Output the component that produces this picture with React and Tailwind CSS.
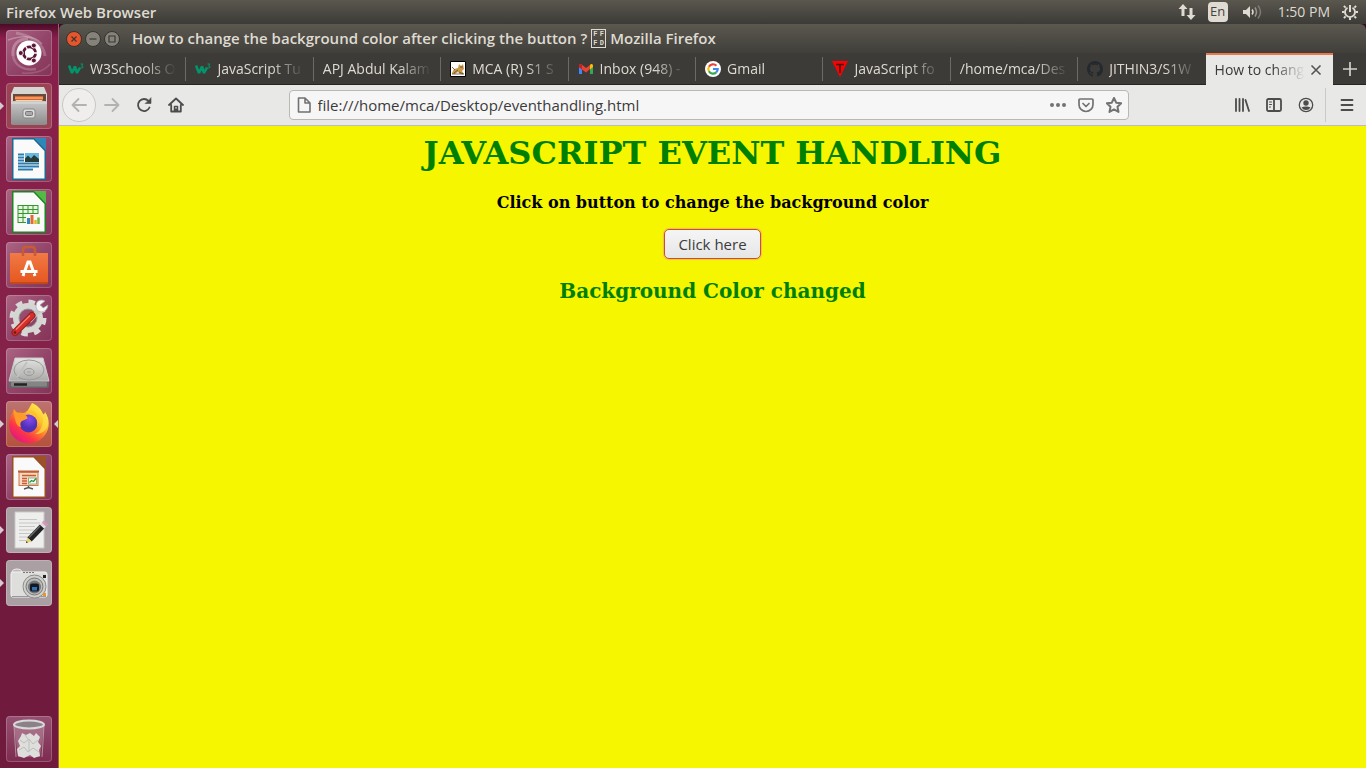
import React from "react";

function Ubuntu() {
  return (
    <svg viewBox="0 0 46 46" className="size-full" aria-hidden="true">
      <g fill="none" stroke="#fff" strokeOpacity=".28" strokeWidth="1.6">
        <path d="M2 10C14 6 28 4 36 14" />
        <path d="M10 3C26 6 38 14 39 26" strokeWidth="3" strokeOpacity=".22" />
        <path d="M7 26C6 14 12 9 22 9" strokeWidth="3" />
        <path d="M7 26C9 36 18 41 30 39" strokeWidth="2.5" strokeOpacity=".2" />
        <path d="M44 34C38 42 26 44 16 43" strokeOpacity=".15" />
      </g>
      <circle cx="23" cy="23" r="12.5" fill="#fff" />
      <circle cx="23.5" cy="23" r="6" fill="none" stroke="#5e1638" strokeWidth="3" />
      <g stroke="#fff" strokeWidth="1.3">
        <path d="M23.5 23L31.5 23M23.5 23L19.5 16M23.5 23L19.5 30" />
      </g>
      <circle cx="23.5" cy="23" r="4.5" fill="#fff" />
      <g fill="#5e1638" stroke="#fff" strokeWidth=".9">
        <circle cx="14.8" cy="23" r="2.5" />
        <circle cx="27.8" cy="15.5" r="2.5" />
        <circle cx="27.8" cy="30.5" r="2.5" />
      </g>
    </svg>
  );
}

function Files() {
  return (
    <svg viewBox="0 0 46 46" className="size-full" aria-hidden="true">
      <defs>
        <linearGradient id="fi" x2="0" y2="1">
          <stop stopColor="#c9c9c9" /><stop offset="1" stopColor="#8b8b8b" />
        </linearGradient>
      </defs>
      <path d="M8 4H38L41 11V41H5V11Z" fill="#d6d6d3" />
      <path d="M7 11H40V19H7Z" fill="#6a4b3a" />
      <path d="M9 13H37V19H9Z" fill="#d9652a" />
      <path d="M9 15H37M10 17.500H36" stroke="#f7d3a8" strokeWidth="1" />
      <path d="M5 20Q5 18 7 18H39Q41 18 41 20V40Q41 42 39 42H7Q5 42 5 40Z" fill="url(#fi)" />
      <path d="M5 20H41" stroke="#e0e0e0" />
      <rect x="17" y="26" width="12" height="9" rx="2" fill="#ddd" stroke="#888" />
      <rect x="19.5" y="28.500" width="7" height="4" rx="1" fill="#aaa" stroke="#777" />
    </svg>
  );
}

function Sheet({ color, fold, children }) {
  return (
    <svg viewBox="0 0 46 46" className="size-full" aria-hidden="true">
      <path d="M6 2H29L40 14V44H6Z" fill={color} />
      <path d="M7.500 3.500H27.500L38.500 15V42.500H7.500Z" fill="#fafafa" />
      <path d="M28 2H40V14.500Z" fill={fold} />
      {children}
    </svg>
  );
}

const Writer = () => (
  <Sheet color="#1d6793" fold="#2f86b8">
    <path d="M12 18.500H18M12 21.500H18M12 24.500H18M12 27.500H33M12 30.500H33M12 33.500H27" stroke="#2b7db0" strokeWidth="2" />
    <rect x="19" y="17" width="14" height="9" fill="#68b7e2" />
    <path d="M19 26V22.500L22 19.500L25 22.500L28 19L33 23V26Z" fill="#263c36" />
  </Sheet>
);

const Calc = () => (
  <Sheet color="#18851d" fold="#55b948">
    <rect x="12" y="16.500" width="20" height="17" fill="#e6f5df" stroke="#35952f" />
    <path d="M12 20.500H32M12 24.500H32M12 28.500H32M17 16V34M22 16V34M27 16V34" stroke="#35952f" />
    <rect x="20" y="25" width="14" height="10" fill="#f6f6f6" />
    <path d="M22.500 35V29" stroke="#3387bb" strokeWidth="3" />
    <path d="M26 35V26" stroke="#e06c30" strokeWidth="3" />
    <path d="M29.500 35V31" stroke="#e4b528" strokeWidth="2.500" />
    <path d="M32.500 35V28.500" stroke="#6db43f" strokeWidth="2.500" />
  </Sheet>
);

const Impress = () => (
  <Sheet color="#9a4d20" fold="#9b5228">
    <path d="M12 17.500H33" stroke="#bd6134" strokeWidth="2" />
    <rect x="13" y="18.500" width="19" height="13" fill="#f7d9c5" stroke="#cf7549" />
    <path d="M16 21.500H30M16 24.500H21M16 27H21M16 29.500H21" stroke="#c65c30" strokeWidth="1.300" />
    <rect x="22.500" y="24" width="8" height="6" fill="#fff" stroke="#8bb07c" />
    <path d="M23.500 28.500L25.500 26.500L27.500 27.500L30 24.500" fill="none" stroke="#29933a" strokeWidth="1.300" />
    <path d="M22.500 32V34M18 35L22.500 33.500L27 35" fill="none" stroke="#555" strokeWidth="1.500" />
  </Sheet>
);

function Software() {
  return (
    <svg viewBox="0 0 46 46" className="size-full" aria-hidden="true">
      <defs>
        <linearGradient id="so" x2="0" y2="1">
          <stop stopColor="#f07a45" /><stop offset="1" stopColor="#e5561e" />
        </linearGradient>
      </defs>
      <path d="M4 11H42V40Q42 42 40 42H6Q4 42 4 40Z" fill="url(#so)" />
      <path d="M17 14V8Q17 5 20 5H26Q29 5 29 8V14" fill="none" stroke="#c95a33" strokeWidth="2.500" />
      <path d="M4 41H42" stroke="#b9431a" strokeWidth="1.500" />
      <path d="M17 34L22 20H24L29 34M14.500 29.500H31.500" fill="none" stroke="#fff" strokeWidth="3" />
      <path d="M19 31.500H28" stroke="#e5602a" />
    </svg>
  );
}

function Settings() {
  return (
    <svg viewBox="0 0 46 46" className="size-full" aria-hidden="true">
      <circle cx="22" cy="23" r="15.500" fill="none" stroke="#d8d8d6" strokeWidth="6" strokeDasharray="6.200 5.970" />
      <circle cx="22" cy="23" r="12" fill="none" stroke="#d5d5d3" strokeWidth="6" />
      <circle cx="22" cy="23" r="9" fill="none" stroke="#929292" />
      <path d="M23 26L34 14" stroke="#c8c8c8" strokeWidth="5" />
      <path d="M36 5Q30 5 30 11Q30 16 35 17Q41 17 42 10L37 13L34 10L39 6Z" fill="#f3f3f3" stroke="#aaa" strokeWidth=".7" />
      <path d="M9 37.500L26 20.500" stroke="#951f1e" strokeWidth="7" strokeLinecap="round" />
      <path d="M9 37.500L26 20.500" stroke="#d62e29" strokeWidth="5" strokeLinecap="round" />
      <path d="M10 34.500L24 20.500" stroke="#f48179" strokeWidth="1.200" />
      <circle cx="9" cy="37.500" r="1.300" fill="#691616" />
    </svg>
  );
}

function Disk() {
  return (
    <svg viewBox="0 0 46 46" className="size-full" aria-hidden="true">
      <defs>
        <linearGradient id="di" x2="0" y2="1">
          <stop stopColor="#e3e3e1" /><stop offset="1" stopColor="#a9a9a7" />
        </linearGradient>
      </defs>
      <path d="M9 10H37L43 33V38Q43 40 41 40H5Q3 40 3 38V33Z" fill="#666" />
      <path d="M9 10H37L43 33H3Z" fill="url(#di)" stroke="#c9c9c9" />
      <ellipse cx="23" cy="22" rx="15" ry="10" fill="none" stroke="#999" />
      <ellipse cx="23" cy="24" rx="5" ry="3.500" fill="none" stroke="#999" />
      <ellipse cx="23" cy="24" rx="2" ry="1.200" fill="#b0b0b0" />
      <path d="M21 14L11 29" stroke="#c0c0c0" strokeWidth="2" />
      <rect x="5" y="34" width="36" height="4.500" rx="1" fill="#858585" />
      <path d="M8 36.500H21" stroke="#222" strokeWidth="2.500" />
    </svg>
  );
}

function Firefox() {
  return (
    <svg viewBox="0 0 46 46" className="size-full" aria-hidden="true">
      <defs>
        <linearGradient id="ff" x1=".85" y1=".1" x2=".2" y2=".95">
          <stop stopColor="#fff04f" /><stop offset=".3" stopColor="#ffc02e" />
          <stop offset=".52" stopColor="#ff7a2b" /><stop offset=".75" stopColor="#fb3547" />
          <stop offset="1" stopColor="#e31587" />
        </linearGradient>
        <radialGradient id="fg" cx=".55" cy=".25">
          <stop stopColor="#8a4bf0" /><stop offset="1" stopColor="#5030b8" />
        </radialGradient>
      </defs>
      <path d="M26 2C33 5 36 10 37 13C39 14 39 12 39 11C44 18 44 27 39 34C34 41 26 43 20 42C10 41 3 33 3 24C3 18 5 14 7 11L8 8L11 12Q14 11 17 12C21 12 22 9 26 2Z" fill="url(#ff)" />
      <path d="M26 2C33 5 38 13 37 21C36 27 33 31 29 33C36 34 43 28 42 19C41 15 40 13 39 11Q38 14 37 14Q34 6 26 2Z" fill="#ffe14a" fillOpacity=".7" />
      <circle cx="22.500" cy="22.500" r="9" fill="url(#fg)" />
      <path d="M8 8C9 12 13 12 17 12.500C20 14 22 16 21.500 17.500L16 20C14 21 14 24 15 26C12 26 10 23 9 18C8 14 7 11 8 8Z" fill="#ff9b29" />
      <path d="M17 13C21 9 26 12 28 15C32 17 32 22 30.500 26C35 19 32 12 26 10C23 9 20 10 17 13Z" fill="#ffc02d" />
    </svg>
  );
}

function TextEditor() {
  return (
    <svg viewBox="0 0 46 46" className="size-full" aria-hidden="true">
      <path d="M9 5H38V41H9Z" fill="#eeeeec" stroke="#c9c9c7" />
      <path d="M13 12.500H31M13 16H34M13 19.500H29M13 23H28M13 26.500H25M13 30H22M13 33.500H21" stroke="#c6c6c4" strokeWidth="1" />
      <path d="M23.500 32.500L36 19.500" stroke="#222" strokeWidth="6" />
      <path d="M23 30.500L34 19" stroke="#666" strokeWidth="1.500" />
      <path d="M36 19.500L38 17.500" stroke="#ddd" strokeWidth="6" />
      <path d="M38 17.500L40 15.500" stroke="#d995bd" strokeWidth="6" />
      <path d="M20 36L21.400 30.400L25.700 34.600Z" fill="#ecd26a" />
      <path d="M20 36L20.500 34L21.900 35.500Z" fill="#222" />
    </svg>
  );
}

function Camera() {
  return (
    <svg viewBox="0 0 46 46" className="size-full" aria-hidden="true">
      <ellipse cx="11" cy="12" rx="5" ry="3" fill="#bbb" stroke="#f0f0f0" />
      <rect x="5" y="12" width="36" height="25" rx="2" fill="#dededc" stroke="#f2f2f0" />
      <path d="M6 36.500H40" stroke="#999" />
      <path d="M17 12.500H29" stroke="#777" strokeDasharray="2 1" />
      <circle cx="28.500" cy="26.500" r="11.500" fill="#cfcfcd" stroke="#8b8b89" />
      <circle cx="28.500" cy="26.500" r="8.500" fill="#bcbcba" stroke="#777" />
      <circle cx="28.500" cy="27" r="6.500" fill="#777" />
      <rect x="24" y="23.500" width="9" height="8" rx="2" fill="#10182a" />
      <rect x="26" y="27" width="5" height="3.500" fill="#3670a8" />
      <rect x="37" y="15" width="3" height="3" fill="#222" />
      <rect x="37" y="33" width="3" height="3" fill="#f09422" />
    </svg>
  );
}

function Trash() {
  return (
    <svg viewBox="0 0 46 46" className="size-full" aria-hidden="true">
      <path d="M8 9H38L34 41H12Z" fill="#fff" fillOpacity=".22" />
      <path d="M10 41L8 10M36 41L38 10" stroke="#ccc" strokeOpacity=".6" />
      <path d="M12 40L11 33L14 30L12 25L15 20L16 17L20 19L24 17L28 20L30 17L34 21L32 26L35 30L33 34L34 40L28 42L24 39L18 42Z" fill="#dededc" />
      <path d="M14 24L18 27L23 23L27 28L32 24M13 34L18 31L22 36L27 32L33 36M19 19L22 23M23 24V35" fill="none" stroke="#bdbdbb" strokeWidth="1" />
      <ellipse cx="23" cy="8.500" rx="15" ry="4" fill="#8b8189" stroke="#d9d9d7" strokeWidth="2" />
    </svg>
  );
}

const glass = "bg-gradient-to-br from-[#ab6583] via-[#93466a] to-[#853457]";
const APPS = [
  { name: "Search your computer", Icon: Ubuntu, tile: glass },
  { name: "Files", Icon: Files, tile: "bg-[#9a4355]", running: true },
  { name: "LibreOffice Writer", Icon: Writer, tile: glass },
  { name: "LibreOffice Calc", Icon: Calc, tile: glass },
  { name: "Ubuntu Software", Icon: Software, tile: glass },
  { name: "System Settings", Icon: Settings, tile: glass },
  { name: "Disks", Icon: Disk, tile: glass },
  { name: "Firefox Web Browser", Icon: Firefox, tile: "bg-gradient-to-b from-[#bd7371] to-[#b4523b]", running: true, focused: true },
  { name: "LibreOffice Impress", Icon: Impress, tile: glass },
  { name: "Text Editor", Icon: TextEditor, tile: "bg-[#aaa0a4]", running: true },
  { name: "Screenshot", Icon: Camera, tile: "bg-[#aaa0a4]", running: true },
];

function LauncherButton({ app }) {
  const { Icon, name, tile, running, focused } = app;
  return (
    <div className="relative flex w-full justify-center">
      {running && <span className="absolute top-1/2 left-0 -mt-1 border-y-4 border-l-4 border-y-transparent border-l-[#d5ccd0]" />}
      <button type="button" aria-label={name} className={`size-[46px] rounded inset-ring inset-ring-white/20 ${tile}`}>
        <Icon />
      </button>
      {focused && <span className="absolute top-1/2 right-0 -mt-1 border-y-4 border-r-4 border-y-transparent border-r-[#d5ccd0]" />}
    </div>
  );
}

function Launcher() {
  return (
    <nav aria-label="Launcher" className="flex w-[59px] shrink-0 flex-col justify-between border-r border-[#a75878] bg-[linear-gradient(#4c0b28_0px,#87204a_14px,#852249_45%,#701b3d_75%,#701b3d)] pt-[6px] pb-[6px]">
      <div className="flex flex-col gap-[7px]">
        {APPS.map((a) => <LauncherButton key={a.name} app={a} />)}
      </div>
      <LauncherButton app={{ name: "Trash", Icon: Trash, tile: "bg-gradient-to-b from-[#965071] to-[#7e2b50]" }} />
    </nav>
  );
}

function PowerIcon() {
  return (
    <svg viewBox="0 0 16 16" className="size-4" fill="none" stroke="#dfdbd2" aria-hidden="true">
      <path d="M5.500 3.700A5 5 0 1 0 10.500 3.700" strokeWidth="1.800" />
      <path d="M8 1V8" strokeWidth="2" />
      <path d="M3.600 3.600L1.900 1.900M12.400 3.600L14.100 1.900M2.500 8H0M13.500 8H16M3.600 12.400L1.900 14.100M12.400 12.400L14.100 14.100M8 13.500V16" strokeWidth="2" />
    </svg>
  );
}

function TopPanel() {
  return (
    <header className="flex h-6 shrink-0 items-center justify-between bg-gradient-to-b from-[#5a574e] to-[#3c3b37] pr-2 pl-[6px] text-[#dfdbd2]">
      <span className="text-[15px] font-semibold">Firefox Web Browser</span>
      <div className="flex items-center">
        <svg viewBox="0 0 18 18" className="mr-3 size-[18px]" fill="#dfdbd2" aria-hidden="true">
          <path d="M5 1L9.500 6H6.500V13H3.500V6H.5Z" /><path d="M13 17L8.500 12H11.500V5H14.500V12H17.500Z" />
        </svg>
        <span className="mr-[14px] flex h-5 w-5 items-center justify-center rounded-sm bg-[#dfdbd2] text-[13px] text-[#45433e]">En</span>
        <svg viewBox="0 0 20 16" className="mr-4 h-4 w-5" fill="none" aria-hidden="true">
          <path d="M1 6H4L8 2V14L4 10H1Z" fill="#dfdbd2" />
          <path d="M10 5.500Q12 8 10 10.500" stroke="#dfdbd2" strokeWidth="1.500" />
          <path d="M13 3.500Q16 8 13 12.500" stroke="#9a978f" strokeWidth="1.500" />
          <path d="M16 1.500Q21 8 16 14.500" stroke="#7d7a73" strokeWidth="1.500" />
        </svg>
        <span className="mr-3 text-sm">1:50 PM</span>
        <PowerIcon />
      </div>
    </header>
  );
}

function WindowButton({ label, tone, children }) {
  return (
    <button type="button" aria-label={label} className={`size-4 rounded-full border border-[#35342f] ${tone}`}>
      <svg viewBox="0 0 14 14" className="size-full" fill="none" stroke="#3a3935" strokeWidth="1.200" aria-hidden="true">{children}</svg>
    </button>
  );
}

function TitleBar() {
  return (
    <div className="flex h-[29px] shrink-0 items-center rounded-t-md bg-gradient-to-b from-[#5b584f] to-[#403f3a] pl-[7px] text-[#dfdbd2]">
      <div className="flex gap-[3px]">
        <WindowButton label="Close" tone="bg-[#e9552b]"><path d="M4.500 4.500L9.500 9.500M9.500 4.500L4.500 9.500" /></WindowButton>
        <WindowButton label="Minimize" tone="bg-[#85827a]"><path d="M3.500 7H10.500" /></WindowButton>
        <WindowButton label="Maximize" tone="bg-[#85827a]"><path d="M4 4H10V10H4Z" /></WindowButton>
      </div>
      <h1 className="ml-3 flex items-center gap-1 text-[15px] font-semibold whitespace-nowrap">
        <span>How to change the background color after clicking the button ?</span>
        <span className="grid h-[19px] w-[15px] grid-cols-2 place-items-center border border-[#dfdbd2] font-mono text-[7px] leading-[8px] font-bold">
          <span>F</span><span>F</span><span>F</span><span>D</span>
        </span>
        <span>Mozilla Firefox</span>
      </h1>
    </div>
  );
}

const W3 = () => (
  <svg viewBox="0 0 16 16" className="size-4 shrink-0" fill="none" stroke="#04946a" aria-hidden="true">
    <path d="M1 4.500L4 12L7 5.500L9 12L12 6.500" strokeWidth="2.600" strokeLinejoin="bevel" />
    <path d="M12.500 3H15L13.500 5Q15.500 5 15 6.500Q14 7.500 12.500 6.700" strokeWidth="1" />
  </svg>
);
const Tomcat = () => (
  <svg viewBox="0 0 16 16" className="size-4 shrink-0" aria-hidden="true">
    <path d="M.5.500H15.500V15.500H.5Z" fill="#fff" stroke="#000" />
    <path d="M2 12L4 8L8 7L9 3L11 5L13 3L14 8L12 10L14 13H10L8 11L5 13H2Z" fill="#c99a4b" />
    <path d="M2 6L5 9M4 12L8 9M10 6H13M9 11L13 13M2 13H14" stroke="#604a2a" strokeWidth=".8" />
  </svg>
);
const GmailM = () => (
  <svg viewBox="0 0 16 16" className="size-4 shrink-0" aria-hidden="true">
    <path d="M1 4V13H4V6Z" fill="#4285f4" /><path d="M15 4V13H12V6Z" fill="#34a853" />
    <path d="M12 4L13 3Q15 2.500 15 4.500V6L12 8.500Z" fill="#fbbc04" />
    <path d="M1 6V4.500Q1 2.500 3 3L8 7L12 4V8L8 11.500L4 8.500Z" fill="#ea4335" />
    <path d="M1 4.500Q1 2.500 3 3L4 4V8.500L1 6Z" fill="#c5221f" />
  </svg>
);
const GoogleG = () => (
  <svg viewBox="0 0 16 16" className="size-4 shrink-0" fill="none" strokeWidth="2.200" aria-hidden="true">
    <circle cx="8" cy="8" r="8" fill="#fff" />
    <path d="M11.400 4.700A4.700 4.700 0 0 0 3.900 5.700" stroke="#ea4335" />
    <path d="M3.900 5.700A4.700 4.700 0 0 0 3.900 10.300" stroke="#fbbc05" />
    <path d="M3.900 10.300A4.700 4.700 0 0 0 11.200 11.400" stroke="#34a853" />
    <path d="M11.200 11.400A4.700 4.700 0 0 0 12.700 8H8" stroke="#4285f4" />
  </svg>
);
const Triangle = () => (
  <svg viewBox="0 0 16 16" className="size-4 shrink-0" aria-hidden="true">
    <path d="M0 0H16L8 16Z" fill="#f00" />
    <path d="M4 3.500H12M8 3.500V12" stroke="#3c1512" strokeWidth="1.600" />
  </svg>
);
const Octocat = () => (
  <svg viewBox="0 0 16 16" className="size-4 shrink-0" fill="#24292e" aria-hidden="true">
    <path d="M8 0C3.580 0 0 3.580 0 8c0 3.540 2.290 6.530 5.470 7.590.4.070.55-.17.55-.38 0-.19-.01-.82-.01-1.490-2.010.37-2.530-.49-2.690-.94-.09-.23-.48-.94-.82-1.130-.28-.15-.68-.52-.01-.53.63-.01 1.080.58 1.230.82.72 1.210 1.870.87 2.330.66.07-.52.28-.87.51-1.070-1.780-.2-3.640-.89-3.640-3.950 0-.87.31-1.590.82-2.150-.08-.2-.36-1.020.08-2.120 0 0 .67-.21 2.200.82.64-.18 1.320-.27 2-.27s1.360.09 2 .27c1.530-1.040 2.200-.82 2.200-.82.44 1.100.16 1.920.08 2.120.51.56.82 1.270.82 2.150 0 3.070-1.870 3.750-3.650 3.950.29.25.54.73.54 1.480 0 1.070-.01 1.930-.01 2.200 0 .21.15.46.55.38A8.010 8.010 0 0 0 16 8c0-4.420-3.580-8-8-8z" />
  </svg>
);

const TABS = [
  { title: "W3Schools O", Icon: W3 },
  { title: "JavaScript Tu", Icon: W3 },
  { title: "APJ Abdul Kalam" },
  { title: "MCA (R) S1 S", Icon: Tomcat },
  { title: "Inbox (948) -", Icon: GmailM },
  { title: "Gmail", Icon: GoogleG },
  { title: "JavaScript fo", Icon: Triangle },
  { title: "/home/mca/Des" },
  { title: "JITHIN3/S1W", Icon: Octocat },
];

const fade = "min-w-0 flex-1 overflow-hidden text-left whitespace-nowrap [mask-image:linear-gradient(to_right,black_calc(100%-32px),transparent)]";

function TabStrip() {
  return (
    <div className="flex h-8 shrink-0 bg-[#3c3b37] text-sm text-[#dfdbd2]">
      <div role="tablist" className="grid min-w-0 flex-1 grid-cols-10">
        {TABS.map(({ title, Icon }, i) => (
          <div key={title} className="flex min-w-0 items-center border-b border-[#262522]">
            <button type="button" role="tab" aria-selected="false" className="flex min-w-0 flex-1 items-center gap-[6px] px-[9px]">
              {Icon && <Icon />}
              <span className={fade}>{title}</span>
            </button>
            {i < TABS.length - 1 && <span className="h-6 w-px bg-[#6c6a64]" />}
          </div>
        ))}
        <div className="flex min-w-0 items-center border-t-2 border-[#e9794b] bg-[#e8e8e7] pr-[10px] pl-[9px] text-[#3a3a3a]">
          <button type="button" role="tab" aria-selected="true" className={fade}>How to change</button>
          <button type="button" aria-label="Close tab" className="ml-1">
            <svg viewBox="0 0 14 14" className="size-[14px]" stroke="#555" strokeWidth="1.600" aria-hidden="true"><path d="M2.500 2.500L11.500 11.500M11.500 2.500L2.500 11.500" /></svg>
          </button>
        </div>
      </div>
      <button type="button" aria-label="New tab" className="flex w-[33px] items-center justify-center border-b border-[#262522]">
        <svg viewBox="0 0 14 14" className="size-[14px]" stroke="#d5d2ca" strokeWidth="1.700" aria-hidden="true"><path d="M7 0V14M0 7H14" /></svg>
      </button>
    </div>
  );
}

function ToolButton({ label, className = "size-8", stroke = "#4c4c4c", children }) {
  return (
    <button type="button" aria-label={label} className={`flex items-center justify-center ${className}`}>
      <svg viewBox="0 0 16 16" className="size-4" fill="none" stroke={stroke} strokeWidth="1.800" strokeLinecap="round" strokeLinejoin="round" aria-hidden="true">{children}</svg>
    </button>
  );
}

function Toolbar() {
  return (
    <div className="flex h-[41px] shrink-0 items-center border-b border-[#bcbcbc] bg-[#e8e8e7]">
      <div className="flex flex-1 items-center">
        <ToolButton label="Back" stroke="#b2b2b0" className="ml-[3px] size-[34px] rounded-full border border-[#c8c8c6] bg-[#efeeec]"><path d="M15 8H1.500M7.500 2L1.500 8L7.500 14" /></ToolButton>
        <ToolButton label="Forward" stroke="#b2b2b0"><path d="M1 8H14.500M8.500 2L14.500 8L8.500 14" /></ToolButton>
        <ToolButton label="Reload">
          <path d="M13.500 10.500A6 6 0 1 1 12.500 4" /><path d="M15 1V6.500H9.500Z" fill="#4c4c4c" strokeWidth=".6" />
        </ToolButton>
        <ToolButton label="Home"><path d="M1 8L8 1.500L15 8M3.200 8V14.500H12.800V8" /><path d="M6.500 14V9.500H9.500V14M8 12V13.500" strokeWidth="1.500" /></ToolButton>
      </div>
      <div className="flex h-[30px] w-[840px] items-center rounded border border-[#bab8b4] bg-[#f6f6f6] pr-[6px] pl-[6px]">
        <svg viewBox="0 0 16 16" className="size-4" fill="none" stroke="#727272" strokeWidth="1.600" strokeLinejoin="round" aria-hidden="true"><path d="M2.500 1H9L14 6V15H2.500ZM9 1V6H14" /></svg>
        <input aria-label="Address" defaultValue="file:///home/mca/Desktop/eventhandling.html" className="ml-[6px] min-w-0 flex-1 bg-transparent text-[15px] text-[#3b3b3b] outline-none" />
        <div className="flex items-center gap-3">
          <button type="button" aria-label="Page actions">
            <svg viewBox="0 0 16 16" className="size-4" fill="#727272" aria-hidden="true"><circle cx="2" cy="8" r="2" /><circle cx="8" cy="8" r="2" /><circle cx="14" cy="8" r="2" /></svg>
          </button>
          <button type="button" aria-label="Save to Pocket">
            <svg viewBox="0 0 16 16" className="size-4" fill="none" stroke="#727272" strokeWidth="1.700" strokeLinecap="round" strokeLinejoin="round" aria-hidden="true"><path d="M2 2H14Q15 2 15 3V7.500A7 7 0 0 1 1 7.500V3Q1 2 2 2ZM5 6.500L8 9.500L11 6.500" /></svg>
          </button>
          <button type="button" aria-label="Bookmark this page">
            <svg viewBox="0 0 16 16" className="size-4" fill="none" stroke="#727272" strokeWidth="2" strokeLinejoin="round" aria-hidden="true"><path d="M8 1L10.200 5.700L15.200 6.300L11.500 9.800L12.500 14.900L8 12.400L3.500 14.900L4.500 9.800L.8 6.300L5.800 5.700Z" /></svg>
          </button>
        </div>
      </div>
      <div className="flex flex-1 items-center justify-end pl-2">
        <ToolButton label="Library"><path d="M2 2V14M5.500 2V14M9 2V14M11.500 3L15 14" /></ToolButton>
        <ToolButton label="Sidebars"><path d="M2.500 2H13.500Q15 2 15 3.500V12.500Q15 14 13.500 14H2.500Q1 14 1 12.500V3.500Q1 2 2.500 2ZM8 2V14" /><path d="M3.500 5H5.500M3.500 7.500H5.500M3.500 10H4.500" strokeWidth="1" /></ToolButton>
        <ToolButton label="Account">
          <circle cx="8" cy="8" r="6.700" strokeWidth="1.300" />
          <circle cx="8" cy="6" r="2.700" fill="#4c4c4c" stroke="none" />
          <path d="M3.500 10.500Q5 9.500 8 9.500T12.500 10.500Q11 13 8 13T3.500 10.500Z" fill="#4c4c4c" stroke="none" />
        </ToolButton>
        <span className="ml-[3px] h-[34px] w-px bg-[#c9c9c8]" />
        <ToolButton label="Menu" className="mr-[3px] ml-[5px] size-8"><path d="M2.500 3H13.500M2.500 8H13.500M2.500 13H13.500" /></ToolButton>
      </div>
    </div>
  );
}

function Page() {
  return (
    <main className="flex flex-1 flex-col items-center bg-[#f6f600] pt-2 font-['DejaVu_Serif',serif] font-bold">
      <h2 className="text-[32px] leading-[38px] text-[#008000]">JAVASCRIPT EVENT HANDLING</h2>
      <p className="mt-[21px] text-base leading-5">Click on button to change the background color</p>
      <button type="button" className="mt-4 h-[30px] rounded-[5px] border border-[#cc4f2c] bg-gradient-to-b from-[#f5f5f5] to-[#e6e6e6] px-[13px] font-['Open_Sans',sans-serif] text-[15px] font-normal text-[#3c3c3c] shadow-[0_0_1px_1px_#f0c04a]">Click here</button>
      <p className="mt-5 text-xl leading-6 text-[#008000]">Background Color changed</p>
    </main>
  );
}

export default function App() {
  return (
    <div className="flex min-h-screen flex-col bg-[#3c0a22] font-['Open_Sans',sans-serif]">
      <TopPanel />
      <div className="flex flex-1">
        <Launcher />
        <section aria-label="Mozilla Firefox" className="flex min-w-0 flex-1 flex-col">
          <TitleBar />
          <TabStrip />
          <Toolbar />
          <Page />
        </section>
      </div>
    </div>
  );
}
